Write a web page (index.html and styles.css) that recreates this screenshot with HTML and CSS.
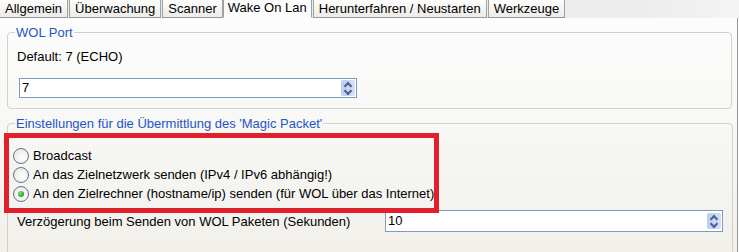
FILE: index.html
```html
<!DOCTYPE html>
<html lang="de">
<head>
    <meta charset="UTF-8">
    <title>Wake On Lan</title>
    <link rel="stylesheet" href="styles.css">
</head>
<body>
    <div class="window">
        <div class="tabs">
            <span class="tab">Allgemein</span>
            <span class="tab">Überwachung</span>
            <span class="tab">Scanner</span>
            <span class="tab active">Wake On Lan</span>
            <span class="tab">Herunterfahren / Neustarten</span>
            <span class="tab">Werkzeuge</span>
        </div>
        <div class="panel">
            <fieldset class="group port">
                <legend>WOL Port</legend>
                <div class="hint">Default: 7 (ECHO)</div>
                <div class="spin port-spin">
                    <span class="value">7</span>
                    <span class="arrows"><span class="up"></span><span class="down"></span></span>
                </div>
            </fieldset>
            <fieldset class="group packet">
                <legend>Einstellungen für die Übermittlung des 'Magic Packet'</legend>
                <div class="radios">
                    <label class="radio"><span class="dot"></span>Broadcast</label>
                    <label class="radio"><span class="dot"></span>An das Zielnetzwerk senden (IPv4 / IPv6 abhängig!)</label>
                    <label class="radio checked"><span class="dot"></span>An den Zielrechner (hostname/ip) senden (für WOL über das Internet)</label>
                </div>
                <div class="delay">
                    <span class="delay-label">Verzögerung beim Senden von WOL Paketen (Sekunden)</span>
                    <div class="spin delay-spin">
                        <span class="value">10</span>
                        <span class="arrows"><span class="up"></span><span class="down"></span></span>
                    </div>
                </div>
            </fieldset>
        </div>
        <div class="highlight"></div>
    </div>
</body>
</html>
```

FILE: styles.css
```css
body {
    margin: 0;
    font-family: "Liberation Sans", Arial, sans-serif;
    font-size: 13px;
    color: #000;
    background: #fff;
}
.window {
    position: relative;
    width: 739px;
    height: 252px;
    overflow: hidden;
    background: #fff;
}
.tabs {
    display: flex;
    height: 18px;
    background: linear-gradient(to right, #ececec 85%, #f4f4f4);
}
.tab {
    height: 18px;
    line-height: 17px;
    padding: 0 5px;
    margin-right: 1px;
    border-left: 1px solid #9aa2a3;
    border-right: 1px solid #9aa2a3;
    border-bottom: 1px solid #919b9c;
    background: linear-gradient(#fdfdfd, #ecebe6);
    box-sizing: border-box;
}
.tab:first-child {
    border-left: none;
}
.tab.active {
    background: #fcfcfc;
    border-bottom-color: #fcfcfc;
    line-height: 15px;
    padding: 0 4px;
    margin-left: -1px;
}
.panel {
    height: 234px;
    width: 738px;
    box-sizing: border-box;
    border-right: 1px solid #919b9c;
    padding: 7px 5px 0 7px;
    background: linear-gradient(#fcfcfc, #f8f8f6 40%, #f1f0eb);
}
.group {
    margin: 0;
    border: 1px solid #d3d2c8;
    border-radius: 4px;
    padding: 0 9px;
}
.group legend {
    color: #1f55c8;
    padding: 0 1px;
    margin-left: -2px;
    line-height: 15px;
}
.port {
    padding-bottom: 10px;
}
.hint {
    margin-top: 9px;
    line-height: 15px;
}
.spin {
    display: flex;
    align-items: center;
    justify-content: space-between;
    height: 20px;
    box-sizing: border-box;
    border: 1px solid #7f9db9;
    background: #fff;
}
.spin .value {
    padding-left: 2px;
    line-height: 16px;
}
.spin .arrows {
    display: flex;
    flex-direction: column;
    align-items: center;
    justify-content: center;
    gap: 3px;
    width: 14px;
    height: 16px;
    margin-right: 1px;
    border-radius: 2px;
    background: linear-gradient(to right, #b9cdf5, #d4e0fa);
}
.arrows .up,
.arrows .down {
    width: 4px;
    height: 4px;
    border-left: 2px solid #4d6185;
    border-top: 2px solid #4d6185;
}
.arrows .up {
    transform: translateY(2px) rotate(45deg);
}
.arrows .down {
    transform: translateY(-2px) rotate(225deg);
}
.port-spin {
    margin-top: 14px;
    width: 338px;
    margin-left: 2px;
}
.packet {
    margin-top: 7px;
    height: 140px;
}
.radios {
    margin-top: 15px;
    margin-left: -4px;
}
.radio {
    display: flex;
    align-items: center;
    height: 19px;
}
.dot {
    width: 16px;
    height: 16px;
    box-sizing: border-box;
    margin-right: 4px;
    border: 1px solid #5a7396;
    border-radius: 50%;
    background: radial-gradient(circle at 60% 60%, #fff, #e4e3dc);
    position: relative;
}
.radio.checked .dot::after {
    content: "";
    position: absolute;
    left: 4px;
    top: 4px;
    width: 6px;
    height: 6px;
    border-radius: 50%;
    background: radial-gradient(circle at 35% 35%, #8ee07e, #21a121 70%);
}
.delay {
    display: flex;
    align-items: center;
    margin-top: 7px;
}
.delay-label {
    width: 368px;
}
.delay-spin {
    width: 338px;
    height: 22px;
}
/* red annotation frame drawn over the radio options */
.highlight {
    position: absolute;
    left: 4px;
    top: 133px;
    width: 435px;
    height: 80px;
    box-sizing: border-box;
    border: 5px solid #e0202a;
}
```
